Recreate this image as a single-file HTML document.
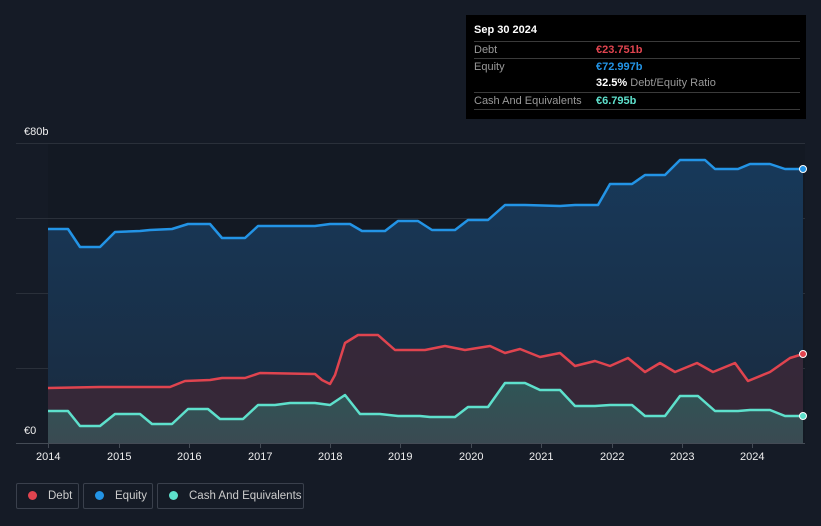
<!DOCTYPE html>
<html><head><meta charset="utf-8"><style>
html,body{margin:0;padding:0;width:821px;height:526px;overflow:hidden}
body{background:#151b26;font-family:"Liberation Sans",sans-serif;position:relative}
.tt{position:absolute;left:466px;top:15px;width:340px;height:104px;background:#000;color:#fff;font-size:11px}
.row{position:absolute;left:8px;width:326px;border-top:1px solid #3a3a3a;height:17px;line-height:17px;color:#999}
.row b{position:absolute;left:122px;font-weight:bold}
.leg{position:absolute;top:483px;height:26px;border:1px solid #3a404c;border-radius:2px;color:#ccc;font-size:11.5px;line-height:24px;box-sizing:border-box;white-space:nowrap;overflow:hidden}
.leg i{display:inline-block;width:9px;height:9px;border-radius:50%;margin:0 11px 0 11px;vertical-align:-1px}
.ax{position:absolute;color:#eee;font-size:11px}
</style></head><body>
<svg width="821" height="526" style="position:absolute;left:0;top:0">
<defs>
<linearGradient id="ge" x1="0" y1="0" x2="0" y2="1"><stop offset="0" stop-color="#17395a"/><stop offset="1" stop-color="#1a2a3e"/></linearGradient>
<linearGradient id="gc" x1="0" y1="0" x2="0" y2="1"><stop offset="0" stop-color="#2f5556"/><stop offset="1" stop-color="#3a4a52"/></linearGradient>
</defs>
<rect x="48" y="143" width="757" height="300" fill="#131923"/>
<g stroke="#2a303a" stroke-width="1"><line x1="16" y1="143.5" x2="805" y2="143.5"/><line x1="16" y1="218.5" x2="805" y2="218.5"/><line x1="16" y1="293.5" x2="805" y2="293.5"/><line x1="16" y1="368.5" x2="805" y2="368.5"/></g>
<path d="M48,229 L68,229 80,247 100,247 115,232 140,231 150,230 172,229 188,224 210,224 222,238 245,238 258,226 315,226 330,224 350,224 362,231 385,231 398,221 418,221 432,230 455,230 468,220 488,220 505,205 525,205 560,206 575,205 598,205 610,184 632,184 645,175 665,175 680,160 705,160 715,169 738,169 750,164 770,164 785,169 803,169 L803,443 48,443Z" fill="url(#ge)"/>
<path d="M48,388 L100,387 170,387 185,381 210,380 222,378 245,378 260,373 315,374 322,380 330,384 335,375 345,343 358,335 378,335 395,350 425,350 445,346 465,350 490,346 505,353 520,349 540,357 560,353 575,366 595,361 610,366 628,358 645,372 660,363 675,372 697,363 713,372 735,363 748,381 770,372 790,358 803,354 L803,443 48,443Z" fill="#3a2837" opacity="0.9"/>
<path d="M48,411 L68,411 80,426 100,426 115,414 140,414 152,424 172,424 188,409 208,409 220,419 243,419 258,405 275,405 290,403 315,403 330,405 345,395 360,414 380,414 398,416 420,416 430,417 455,417 468,407 488,407 505,383 525,383 540,390 560,390 575,406 595,406 610,405 632,405 645,416 665,416 680,396 698,396 715,411 738,411 750,410 770,410 785,416 803,416 L803,443 48,443Z" fill="url(#gc)"/>
<g fill="none" stroke-width="2.5" stroke-linejoin="round">
<path d="M48,229 L68,229 80,247 100,247 115,232 140,231 150,230 172,229 188,224 210,224 222,238 245,238 258,226 315,226 330,224 350,224 362,231 385,231 398,221 418,221 432,230 455,230 468,220 488,220 505,205 525,205 560,206 575,205 598,205 610,184 632,184 645,175 665,175 680,160 705,160 715,169 738,169 750,164 770,164 785,169 803,169" stroke="#2394e6"/>
<path d="M48,388 L100,387 170,387 185,381 210,380 222,378 245,378 260,373 315,374 322,380 330,384 335,375 345,343 358,335 378,335 395,350 425,350 445,346 465,350 490,346 505,353 520,349 540,357 560,353 575,366 595,361 610,366 628,358 645,372 660,363 675,372 697,363 713,372 735,363 748,381 770,372 790,358 803,354" stroke="#e0444f"/>
<path d="M48,411 L68,411 80,426 100,426 115,414 140,414 152,424 172,424 188,409 208,409 220,419 243,419 258,405 275,405 290,403 315,403 330,405 345,395 360,414 380,414 398,416 420,416 430,417 455,417 468,407 488,407 505,383 525,383 540,390 560,390 575,406 595,406 610,405 632,405 645,416 665,416 680,396 698,396 715,411 738,411 750,410 770,410 785,416 803,416" stroke="#5ee0cc"/>
</g>
<circle cx="803" cy="169" r="3.5" fill="#2394e6" stroke="#fff" stroke-width="1"/>
<circle cx="803" cy="354" r="3.5" fill="#e0444f" stroke="#fff" stroke-width="1"/>
<circle cx="803" cy="416" r="3.5" fill="#5ee0cc" stroke="#fff" stroke-width="1"/>
<line x1="16" y1="443.5" x2="805" y2="443.5" stroke="#444b55"/>
<g stroke="#444b55"><line x1="48.5" y1="443" x2="48.5" y2="448"/><line x1="119.5" y1="443" x2="119.5" y2="448"/><line x1="189.5" y1="443" x2="189.5" y2="448"/><line x1="260.5" y1="443" x2="260.5" y2="448"/><line x1="330.5" y1="443" x2="330.5" y2="448"/><line x1="400.5" y1="443" x2="400.5" y2="448"/><line x1="471.5" y1="443" x2="471.5" y2="448"/><line x1="541.5" y1="443" x2="541.5" y2="448"/><line x1="612.5" y1="443" x2="612.5" y2="448"/><line x1="682.5" y1="443" x2="682.5" y2="448"/><line x1="752.5" y1="443" x2="752.5" y2="448"/></g>
</svg>
<div class="ax" style="left:24px;top:126px">€80b</div>
<div class="ax" style="left:24px;top:425px">€0</div>
<div class="ax" style="left:36px;top:451px">2014</div>
<div class="ax" style="left:107px;top:451px">2015</div>
<div class="ax" style="left:177px;top:451px">2016</div>
<div class="ax" style="left:248px;top:451px">2017</div>
<div class="ax" style="left:318px;top:451px">2018</div>
<div class="ax" style="left:388px;top:451px">2019</div>
<div class="ax" style="left:459px;top:451px">2020</div>
<div class="ax" style="left:529px;top:451px">2021</div>
<div class="ax" style="left:600px;top:451px">2022</div>
<div class="ax" style="left:670px;top:451px">2023</div>
<div class="ax" style="left:740px;top:451px">2024</div>
<div class="tt">
<div style="position:absolute;left:8px;top:9px;font-weight:bold">Sep 30 2024</div>
<div class="row" style="top:26px">Debt<b style="color:#e0444f">€23.751b</b></div>
<div class="row" style="top:43px">Equity<b style="color:#2394e6">€72.997b</b></div>
<div class="row" style="top:60px;border-top:none"><b style="color:#fff">32.5% <span style="font-weight:normal;color:#999">Debt/Equity Ratio</span></b></div>
<div class="row" style="top:77px">Cash And Equivalents<b style="color:#5ee0cc">€6.795b</b></div>
<div class="row" style="top:94px;height:0"></div>
</div>
<div class="leg" style="left:16px;width:63px"><i style="background:#e0444f"></i>Debt</div>
<div class="leg" style="left:83px;width:70px"><i style="background:#2394e6"></i>Equity</div>
<div class="leg" style="left:157px;width:147px"><i style="background:#5ee0cc"></i>Cash And Equivalents</div>
</body></html>
